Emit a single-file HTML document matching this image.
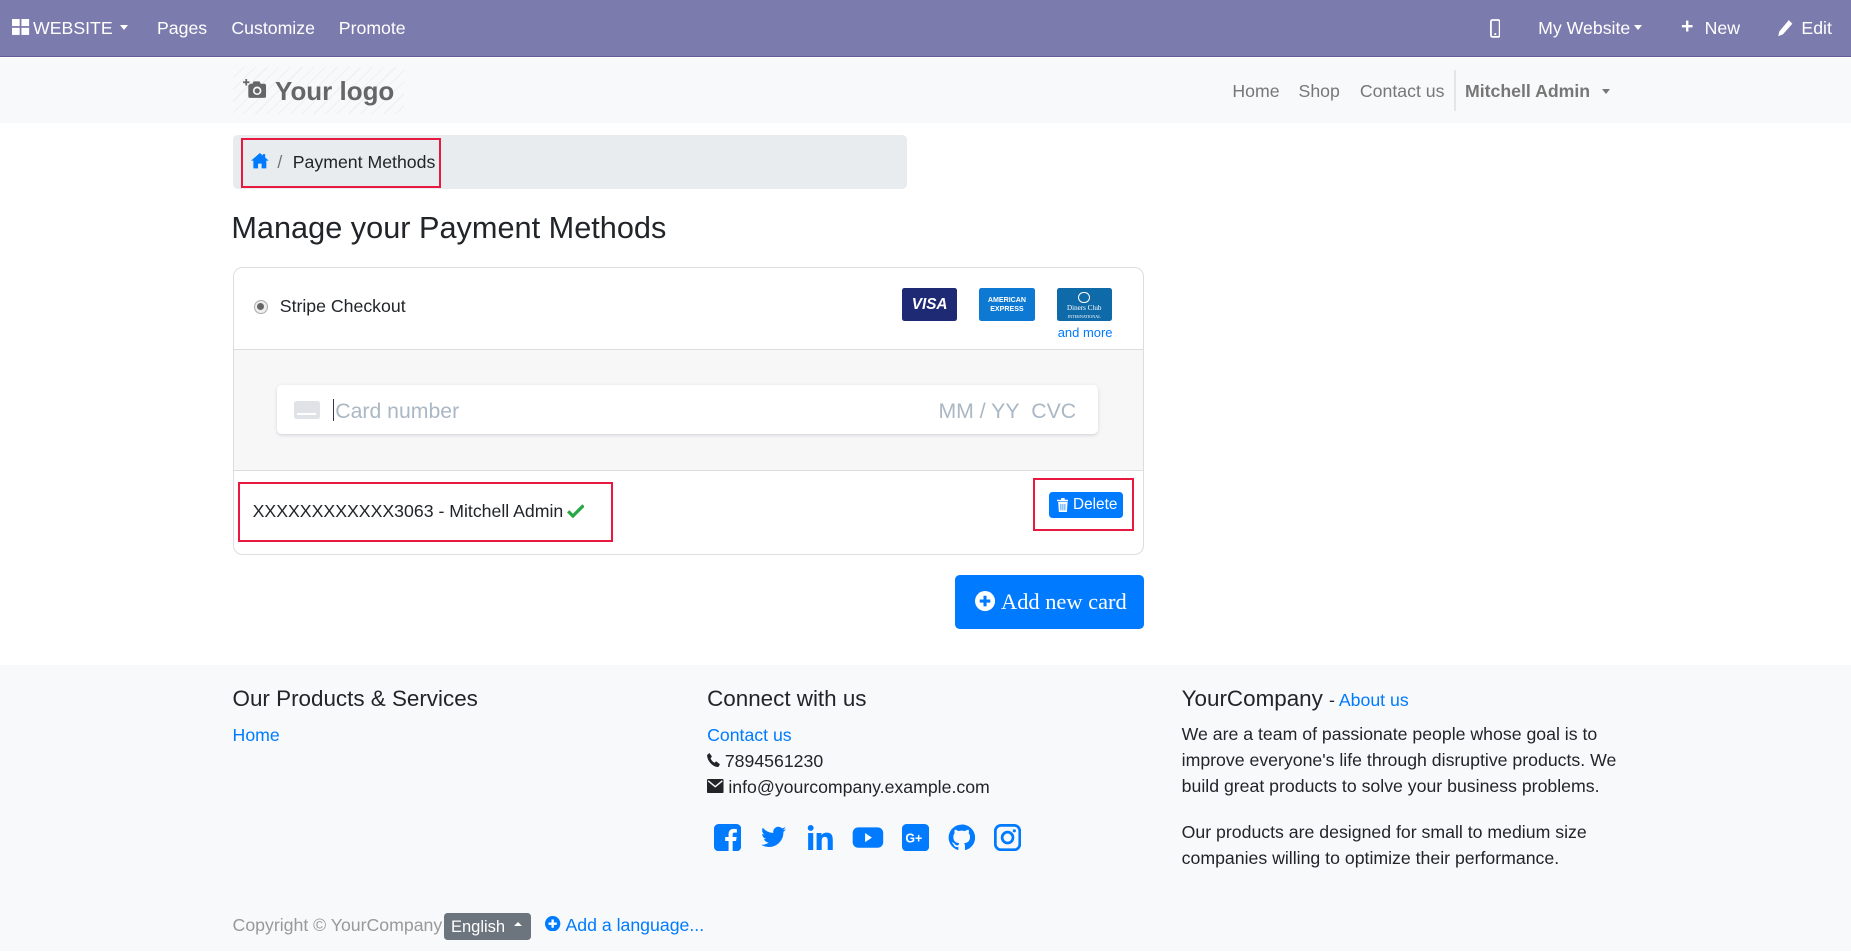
<!DOCTYPE html>
<html><head><meta charset="utf-8">
<style>
*{box-sizing:border-box;margin:0;padding:0}
html,body{width:1851px;height:952px;overflow:hidden;background:#fff}
#z{zoom:1.18048;width:1568px;height:806px;position:relative;font-family:"Liberation Sans",sans-serif;color:#212529}
.a{position:absolute;white-space:nowrap}
#top{position:absolute;left:0;top:0;width:1568px;height:48px;background:#7c7bad;border-bottom:1px solid #5f5e97;color:#fff;font-size:15px}
#top .a{top:15px}
.caret{display:inline-block;width:0;height:0;border-left:4px solid transparent;border-right:4px solid transparent;border-top:5px solid currentColor;vertical-align:3px;margin-left:6px}
#hdr{position:absolute;left:0;top:49px;width:1568px;height:55px;background:#f8f9fa}
#hdr .n{top:20px;font-size:15px;color:#777}
.blue{color:#007bff}
#foot{position:absolute;left:0;top:563px;width:1568px;height:243px;background:#f8f9fa;font-size:15px}
#foot h5{font-weight:normal;font-size:19px;position:absolute}
.soc{position:absolute;top:698px}
</style></head><body><div id="z">

<div id="top">
 <svg class="a" style="left:10px;top:16px" width="15" height="14" viewBox="0 0 15 14"><rect x="0" y="0" width="6.5" height="6" fill="#fff"/><rect x="8" y="0" width="6.5" height="6" fill="#fff"/><rect x="0" y="7.5" width="6.5" height="6" fill="#fff"/><rect x="8" y="7.5" width="6.5" height="6" fill="#fff"/></svg>
 <span class="a" style="left:28px">WEBSITE<span class="caret"></span></span>
 <span class="a" style="left:133px">Pages</span>
 <span class="a" style="left:196px">Customize</span>
 <span class="a" style="left:287px">Promote</span>
 <svg class="a" style="left:1262px;top:16px" width="9" height="16" viewBox="0 0 9 16"><rect x="0.8" y="0.8" width="7.4" height="14.4" rx="1.3" fill="none" stroke="#fff" stroke-width="1.5"/><circle cx="4.5" cy="12.8" r="0.9" fill="#fff"/></svg>
 <span class="a" style="left:1303px">My Website<span class="caret" style="margin-left:3px"></span></span>
 <span class="a" style="left:1424px;font-weight:bold;font-size:18px;top:12px">+</span>
 <span class="a" style="left:1444px">New</span>
 <svg class="a" style="left:1505px;top:16px" width="14" height="15" viewBox="0 0 14 15"><path d="M10 1l3 3-8 9-4 1.5 1-4z" fill="#fff"/></svg>
 <span class="a" style="left:1526px">Edit</span>
</div>

<div id="hdr">
 <div class="a" style="left:197px;top:8px;width:145px;height:40px;background:repeating-linear-gradient(135deg,#f8f9fa 0 6px,#eef0f2 6px 7px)"></div>
 <svg class="a" style="left:206px;top:18px" width="20" height="17" viewBox="0 0 20 17"><path d="M2 0v2H0v1.5h2v2h1.5v-2h2V2h-2V0z" fill="#666"/><path d="M6 4h2l1-2h5l1 2h3a1.5 1.5 0 0 1 1.5 1.5v9A1.5 1.5 0 0 1 18 16H6a1.5 1.5 0 0 1-1.5-1.5v-9z" fill="#666"/><circle cx="12" cy="10" r="3.6" fill="#f8f9fa"/><circle cx="12" cy="10" r="2.2" fill="#666"/></svg>
 <span class="a" style="left:233px;top:15px;font-size:22px;font-weight:bold;color:#666">Your logo</span>
 <span class="a n" style="left:1044px">Home</span>
 <span class="a n" style="left:1100px">Shop</span>
 <span class="a n" style="left:1152px">Contact us</span>
 <div class="a" style="left:1232px;top:10px;width:1px;height:35px;background:#e5e5e5"></div>
 <span class="a n" style="left:1241px;font-weight:bold">Mitchell Admin<span class="caret" style="margin-left:10px"></span></span>
</div>

<div class="a" style="left:197px;top:114px;width:571px;height:46px;background:#e9ecef;border-radius:4px"></div>
<div class="a" style="left:204px;top:117px;width:170px;height:42px;border:2px solid #e8193f"></div>
<svg class="a" style="left:213px;top:130px" width="15" height="13" viewBox="0 0 15 13"><path d="M7.5 0L0 6.5h2V13h4V9h3v4h4V6.5h2L12 3.8V1h-2v1.1z" fill="#007bff"/></svg>
<span class="a" style="left:235px;top:129px;font-size:15px;color:#6c757d">/</span>
<span class="a" style="left:248px;top:129px;font-size:15px">Payment Methods</span>

<span class="a" style="left:196px;top:178px;font-size:26px">Manage your Payment Methods</span>

<div class="a" style="left:197px;top:226px;width:772px;height:244px;border:1px solid #ddd;border-radius:8px;overflow:hidden">
 <div class="a" style="left:0;top:69px;width:772px;height:103px;background:#f7f7f7;border-top:1px solid #ddd;border-bottom:1px solid #ddd"></div>
</div>
<div class="a" style="left:215px;top:254px;width:12px;height:12px;border-radius:50%;border:1px solid #aaa;background:#eee"></div>
<div class="a" style="left:218px;top:257px;width:6px;height:6px;border-radius:50%;background:#666"></div>
<span class="a" style="left:237px;top:251px;font-size:15px">Stripe Checkout</span>
<div class="a" style="left:764px;top:244px;width:47px;height:28px;background:#1f2a74;border-radius:2px;color:#fff;font-weight:bold;font-style:italic;font-size:13px;text-align:center;line-height:28px">VISA</div>
<div class="a" style="left:829px;top:244px;width:48px;height:28px;background:#0d79d3;border-radius:2px;color:#fff;font-size:6px;font-weight:bold;text-align:center;line-height:7px;padding-top:7px">AMERICAN<br>EXPRESS</div>
<div class="a" style="left:895px;top:244px;width:47px;height:28px;background:#0f6aa9;border-radius:2px;color:#fff;font-family:'Liberation Serif',serif;font-size:6px;text-align:center;line-height:6px;padding-top:3px"><span style="display:inline-block;width:10px;height:10px;border:1.5px solid #fff;border-radius:50%"></span><br>Diners Club<br><span style="font-size:3.5px">INTERNATIONAL</span></div>
<span class="a blue" style="left:896px;top:275px;font-size:11px">and more</span>

<div class="a" style="left:235px;top:326px;width:695px;height:42px;background:#fff;border-radius:4px;box-shadow:0 1px 3px rgba(50,50,93,.15),0 1px 0 rgba(0,0,0,.02)"></div>
<div class="a" style="left:249px;top:340px;width:22px;height:15px;background:#dfe3e8;border-radius:2px"></div>
<div class="a" style="left:252px;top:350px;width:16px;height:1.5px;background:#fff"></div>
<div class="a" style="left:282px;top:338px;width:1px;height:19px;background:#32325d"></div>
<span class="a" style="left:284px;top:338px;font-size:18px;color:#aab7c4">Card number</span>
<span class="a" style="left:795px;top:338px;font-size:18px;color:#aab7c4">MM / YY&nbsp; CVC</span>

<div class="a" style="left:202px;top:408px;width:317px;height:51px;border:2px solid #e8193f"></div>
<span class="a" style="left:214px;top:424px;font-size:15px">XXXXXXXXXXXX3063 - Mitchell Admin</span>
<svg class="a" style="left:480px;top:426px" width="15" height="13" viewBox="0 0 15 13"><path d="M1 7l4 4 9-9" fill="none" stroke="#28a745" stroke-width="2.8"/></svg>
<div class="a" style="left:875px;top:405px;width:86px;height:45px;border:2px solid #e8193f"></div>
<div class="a" style="left:889px;top:417px;width:62px;height:22px;background:#007bff;border-radius:3px;color:#fff;font-size:13px;line-height:22px;padding-left:20px">Delete</div>
<svg class="a" style="left:895px;top:422px" width="10" height="12" viewBox="0 0 10 12"><path d="M0 1.5h10v1.3H0zM3.5 0h3v1.5h-3zM1 3.3h8l-.6 8.7H1.6z" fill="#fff"/><path d="M3.3 5v5.5M5 5v5.5M6.7 5v5.5" stroke="#007bff" stroke-width=".6"/></svg>

<div class="a" style="left:809px;top:487px;width:160px;height:46px;background:#007bff;border-radius:4px;color:#fff;font-family:'Liberation Serif',serif;font-size:19px;line-height:46px;padding-left:39px">Add new card</div>
<svg class="a" style="left:826px;top:501px" width="17" height="17" viewBox="0 0 17 17"><circle cx="8.5" cy="8.5" r="8.5" fill="#fff"/><path d="M8.5 4v9M4 8.5h9" stroke="#007bff" stroke-width="2.6"/></svg>

<div id="foot"></div>
<span class="a" style="left:197px;top:581px;font-size:19px">Our Products &amp; Services</span>
<span class="a blue" style="left:197px;top:614px;font-size:15px">Home</span>
<span class="a" style="left:599px;top:581px;font-size:19px">Connect with us</span>
<span class="a blue" style="left:599px;top:614px;font-size:15px">Contact us</span>
<svg class="a" style="left:599px;top:638px" width="11" height="12" viewBox="0 0 11 12"><path d="M2 0l2.2 3-1.2 1.5c.6 1.6 1.8 3 3.3 3.8l1.5-1.2L11 9.5 9.5 12C4.5 11.5.3 7 0 1.8z" fill="#212529"/></svg>
<span class="a" style="left:614px;top:636px;font-size:15px">7894561230</span>
<svg class="a" style="left:599px;top:660px" width="14" height="12" viewBox="0 0 14 12"><rect width="14" height="12" rx="1" fill="#212529"/><path d="M1 1.5l6 5 6-5" fill="none" stroke="#f8f9fa" stroke-width="1.2"/></svg>
<span class="a" style="left:617px;top:658px;font-size:15px">info@yourcompany.example.com</span>

<svg class="soc" style="left:605px" width="23" height="23" viewBox="0 0 24 24"><rect width="24" height="24" rx="4" fill="#007bff"/><path d="M16.5 24v-9h3l.5-3.5h-3.5V9.3c0-1 .3-1.7 1.8-1.7h1.9V4.5c-.3 0-1.5-.2-2.8-.2-2.7 0-4.5 1.7-4.5 4.7v2.5h-3V15h3v9z" fill="#fff"/></svg>
<svg class="soc" style="left:644px" width="23" height="23" viewBox="0 0 24 24"><path d="M23 4.6c-.8.4-1.7.6-2.6.7.9-.6 1.6-1.4 2-2.5-.9.5-1.9.9-2.9 1.1A4.5 4.5 0 0 0 11.8 8 12.8 12.8 0 0 1 2.5 3.3a4.5 4.5 0 0 0 1.4 6c-.7 0-1.4-.2-2-.6 0 2.2 1.5 4 3.6 4.5-.7.2-1.4.2-2 .1.6 1.8 2.2 3.1 4.2 3.1A9 9 0 0 1 1 18.3 12.8 12.8 0 0 0 20.7 7.5v-.6c.9-.6 1.7-1.4 2.3-2.3z" fill="#007bff"/></svg>
<svg class="soc" style="left:684px" width="23" height="23" viewBox="0 0 24 24"><rect x="1" y="8" width="4.5" height="15" fill="#007bff"/><circle cx="3.25" cy="3.5" r="2.6" fill="#007bff"/><path d="M8.5 8h4.3v2c.7-1.3 2.3-2.4 4.6-2.4 4.6 0 5.4 3 5.4 6.9V23h-4.5v-7.6c0-1.8 0-4-2.5-4s-2.8 1.9-2.8 3.9V23H8.5z" fill="#007bff"/></svg>
<svg class="soc" style="left:722px" width="27" height="23" viewBox="0 0 27 24"><rect x="0" y="3" width="27" height="18" rx="5" fill="#007bff"/><path d="M11 8v8l6-4z" fill="#fff"/></svg>
<svg class="soc" style="left:764px" width="23" height="23" viewBox="0 0 24 24"><rect width="24" height="24" rx="4" fill="#007bff"/><text x="3" y="16.5" font-family="Liberation Sans" font-weight="bold" font-size="11" fill="#fff">G+</text></svg>
<svg class="soc" style="left:803px" width="23" height="23" viewBox="0 0 24 24"><path d="M12 .5a11.5 11.5 0 0 0-3.6 22.4c.6.1.8-.2.8-.6v-2c-3.2.7-3.9-1.5-3.9-1.5-.5-1.3-1.3-1.7-1.3-1.7-1-.7.1-.7.1-.7 1.2.1 1.8 1.2 1.8 1.2 1 1.8 2.7 1.3 3.4 1 .1-.8.4-1.3.7-1.6-2.6-.3-5.3-1.3-5.3-5.7 0-1.3.5-2.3 1.2-3.1-.1-.3-.5-1.5.1-3.1 0 0 1-.3 3.2 1.2a11 11 0 0 1 5.8 0c2.2-1.5 3.2-1.2 3.2-1.2.6 1.6.2 2.8.1 3.1.7.8 1.2 1.8 1.2 3.1 0 4.4-2.7 5.4-5.3 5.7.4.4.8 1.1.8 2.2v3.2c0 .4.2.7.8.6A11.5 11.5 0 0 0 12 .5z" fill="#007bff"/></svg>
<svg class="soc" style="left:842px" width="23" height="23" viewBox="0 0 24 24"><rect x="1.2" y="1.2" width="21.6" height="21.6" rx="5" fill="none" stroke="#007bff" stroke-width="2.4"/><circle cx="12" cy="12" r="4.8" fill="none" stroke="#007bff" stroke-width="2.4"/><circle cx="18" cy="6" r="1.4" fill="#007bff"/></svg>

<span class="a" style="left:1001px;top:581px;font-size:19px">YourCompany <span style="font-size:15px">- <span class="blue">About us</span></span></span>
<div class="a" style="left:1001px;top:612px;font-size:15px;line-height:22px;white-space:normal;width:380px">We are a team of passionate people whose goal is to improve everyone's life through disruptive products. We build great products to solve your business problems.<div style="height:17px"></div>Our products are designed for small to medium size companies willing to optimize their performance.</div>

<span class="a" style="left:197px;top:775px;font-size:15px;color:#999">Copyright © YourCompany</span>
<div class="a" style="left:376px;top:773px;width:74px;height:23px;background:#6c757d;border-radius:3px;color:#fff;font-size:14px;line-height:23px;padding-left:6px">English<span class="a" style="left:59px;top:8px;border-left:3.5px solid transparent;border-right:3.5px solid transparent;border-bottom:4px solid #fff"></span></div>
<svg class="a" style="left:462px;top:776px" width="13" height="13" viewBox="0 0 13 13"><circle cx="6.5" cy="6.5" r="6.5" fill="#007bff"/><path d="M6.5 3v7M3 6.5h7" stroke="#fff" stroke-width="2"/></svg>
<span class="a blue" style="left:479px;top:775px;font-size:15px">Add a language...</span>

</div></body></html>
